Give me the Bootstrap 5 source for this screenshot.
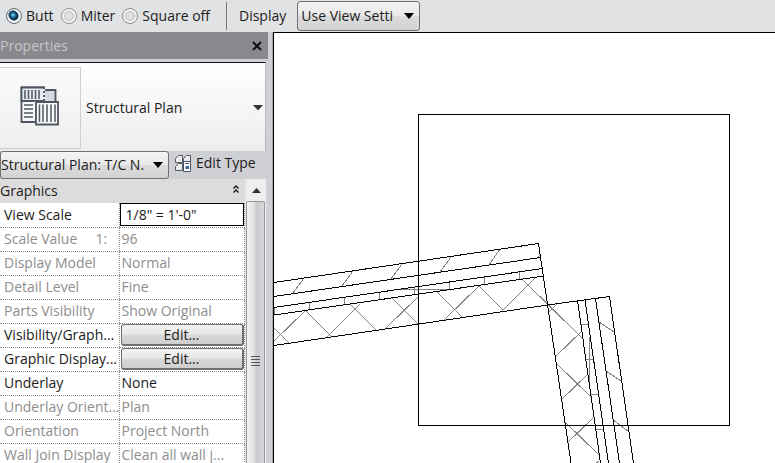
<!DOCTYPE html>
<html lang="en">
<head>
<meta charset="utf-8">
<meta name="viewport" content="width=device-width, initial-scale=1">
<title>Structural Plan</title>
<link rel="stylesheet" href="https://cdn.jsdelivr.net/npm/bootstrap@5.3.0/dist/css/bootstrap.min.css">
<style>
body{font-family:"Open Sans","Noto Sans",sans-serif;font-size:14px;line-height:20px;color:#1c1c1c;background:#e1e2e4}
.options-bar{height:32px;padding-left:6px;background:#e1e2e4}
.options-bar label{font-size:14px}
.opt-label{margin-right:7px}
.opt-radio{appearance:none;width:16px;height:16px;margin:0 4px 0 0;border:1px solid #8b8d90;border-radius:50%;background:radial-gradient(circle,#e0e0e0 0 3px,#c4c6c8 4px,#f7f7f7 6px)}
.opt-radio:checked{border-color:#5f6a72;background:radial-gradient(circle at 6px 6px,#a5e4f7 0,#1d7aa6 2px,#0b3350 4px,transparent 5px),radial-gradient(circle,#0b3350 0 4px,#f4f6f7 5px)}
.bar-rule{width:1px;height:28px;margin:0 12px 0 16px;background:#77787b}
.display-label{margin-right:11px}
.combo{appearance:none;border:1px solid #707070;border-radius:3px;color:#1c1c1c;font-size:14px;background:url("data:image/svg+xml,%3Csvg xmlns='http://www.w3.org/2000/svg' width='10' height='6'%3E%3Cpath d='M0 0h10L5 6z'/%3E%3C/svg%3E") no-repeat right 5px center,linear-gradient(#f4f4f4,#e9e9e9 48%,#dcdcdc 52%,#d2d2d2);white-space:nowrap}
.display-combo{width:123px;height:30px;padding:0 20px 0 3px}
.palette{width:273px;background:#cfd0d3;border-right:1px solid #a5a6a9}
.palette-title{width:268px;height:27px;padding-right:6px;background:#89888c;color:#c6c6ca}
.type-area{width:266px;height:89px;margin-top:3px;border-top:1px solid #111;border-right:1px solid #b9babc;background:linear-gradient(#fff,#ededed)}
.type-thumb{width:81px;height:82px;margin-top:4px;border:1px solid #cfcfcf;border-left:0;background:linear-gradient(#fafafa,#efefef)}
.type-name{padding:2px 2px 0 5px;color:#3d3d3d}
.plain-btn{border:0;background:none;color:#1c1c1c}
.view-combo{width:169px;height:28px;padding:0 18px 0 0}
.edit-type{margin-left:6px;gap:4px}
.grid-box{width:266px;background:#fff}
.props{width:245px;table-layout:fixed;border-collapse:collapse}
.props th,.props td{height:24px;padding:0 0 0 4px;font-weight:400;line-height:20px;white-space:nowrap;overflow:hidden;border-bottom:1px dotted #8c8c8c}
.props td{padding-left:2px;border-left:1px dotted #8c8c8c;border-right:1px dotted #8c8c8c}
.props .group-row th{padding:0 6px 0 0;border:0;background:#dcdcdd}
.props .off{color:#8e8e8e}
.props .flush{padding:0}
.scale-box{display:block;width:100%;height:23px;padding:0 5px;border:1px solid #000;outline:0;background:#fff;color:#1c1c1c}
.edit-btn{display:block;width:123px;height:22px;margin:0 1px;padding:0;border:1px solid #707070;border-right-width:2px;border-bottom-width:2px;border-radius:3px;background:linear-gradient(#f2f2f2,#e8e8e8 45%,#d8d8d8 55%,#cfcfcf);color:#1c1c1c;line-height:18px}
.scroll-track{width:21px;border-left:1px solid #e4e4e4;background:#eee}
.scroll-thumb{width:19px;border:1px solid #97989a;border-bottom:0;border-radius:2px 2px 0 0;background:linear-gradient(90deg,#f3f3f3,#e2e2e4 40%,#c8c9cc 55%,#d6d7d9)}
.scroll-up{height:22px}
.grip{padding-top:154px}
.sheet{border-left:1px solid #000;border-top:1px solid #000;background:#fff}
.sheet path,.sheet rect{fill:none;stroke:#000;shape-rendering:crispEdges}
.sheet .hatch path{stroke:#858585}
</style>
</head>
<body class="vh-100 overflow-hidden d-flex flex-column">
<header class="options-bar d-flex align-items-center flex-shrink-0">
  <input class="opt-radio" type="radio" name="join" id="butt" checked><label for="butt" class="opt-label">Butt</label>
  <input class="opt-radio" type="radio" name="join" id="miter"><label for="miter" class="opt-label">Miter</label>
  <input class="opt-radio" type="radio" name="join" id="square"><label for="square">Square off</label>
  <span class="bar-rule"></span>
  <label for="display" class="display-label">Display</label>
  <select class="combo display-combo" id="display"><option>Use View Setti</option></select>
</header>
<div class="d-flex flex-grow-1 overflow-hidden">
  <aside class="palette d-flex flex-column flex-shrink-0">
    <div class="palette-title d-flex align-items-center justify-content-between flex-shrink-0">
      <span>Properties</span>
      <button class="plain-btn d-flex p-0" type="button" aria-label="Close"><svg width="10" height="10" viewBox="0 0 10 10"><path d="M1 1l8 8M9 1L1 9" stroke="#111" stroke-width="2"/></svg></button>
    </div>
    <div class="type-area d-flex flex-shrink-0">
      <div class="type-thumb d-flex align-items-center justify-content-center flex-shrink-0">
        <svg class="mb-1" width="40" height="40" viewBox="0 0 40 40" fill="#f7f9fb" stroke="#505660" stroke-width="1.8">
          <path d="M24 4h11.500v13H24z" fill="#d5dae6"/><path d="M1.500 1.500H24V17H16v19H1.500z"/>
          <path d="M1.500 1.500H24V15H1.500z" fill="#e6eaf1"/>
          <path d="M5 4v9M8.500 4v9M12 4v9M15.500 4v9M19 4v9M4 19h9M4 23h9M4 27h9M4 31h9" stroke-width="1.500"/>
          <path d="M24 3v13H15.500v19" fill="none" stroke="#fff" stroke-dasharray="2 2"/>
          <path d="M16 16h22v22.500H16z"/><path d="M19.500 18.500v17.500M23 18.500v17.500M27 18.500v17.500M31 18.500v17.500M35 18.500v17.500" stroke-width="1.500"/>
        </svg>
      </div>
      <button class="plain-btn type-name d-flex align-items-center justify-content-between flex-grow-1" type="button"><span>Structural Plan</span>
        <svg width="10" height="6" viewBox="0 0 10 6"><path d="M0 0h10L5 5.500z" fill="#333"/></svg></button>
    </div>
    <div class="d-flex flex-shrink-0">
      <select class="combo view-combo" aria-label="View"><option>Structural Plan: T/C N.</option></select>
      <button class="plain-btn edit-type d-flex align-items-center px-0 pt-0 pb-1" type="button">
        <svg width="17" height="17" viewBox="0 0 17 17" fill="#ececee" stroke="#55585e"><path d="M3.500.5h4v7h-7v-4zM11.500.5h4v7h-7v-4zM3.500 8.500h4v7h-7v-4z"/><path d="M8.500 6.500h7v10h-7z" fill="#fff" stroke="#45536b"/><path d="M10 8.500h4" stroke="#45536b"/><path d="M10.500 11h3.500v3h-3.500z" fill="#3a63a0" stroke="none"/></svg>
        <span>Edit Type</span></button>
    </div>
    <div class="grid-box d-flex flex-grow-1 overflow-hidden">
      <div class="overflow-hidden">
      <table class="props">
        <colgroup><col style="width:119px"><col></colgroup>
        <tbody>
        <tr class="group-row"><th colspan="2"><div class="d-flex align-items-center justify-content-between"><span>Graphics</span><svg class="mb-1" width="6" height="8" viewBox="0 0 6 8" fill="none" stroke="#111" stroke-width="1.300"><path d="M.5 3.500L3 1l2.500 2.500M.5 7.500L3 5l2.500 2.500"/></svg></div></th></tr>
        <tr><th scope="row"><label for="scale">View Scale</label></th><td class="flush"><input class="scale-box" id="scale" value="1/8&quot; = 1'-0&quot;"></td></tr>
        <tr class="off"><th scope="row">Scale Value &nbsp;&nbsp;&nbsp; 1:</th><td>96</td></tr>
        <tr class="off"><th scope="row">Display Model</th><td>Normal</td></tr>
        <tr class="off"><th scope="row">Detail Level</th><td>Fine</td></tr>
        <tr class="off"><th scope="row">Parts Visibility</th><td>Show Original</td></tr>
        <tr><th scope="row">Visibility/Graph...</th><td class="flush"><button class="edit-btn" type="button">Edit...</button></td></tr>
        <tr><th scope="row">Graphic Display...</th><td class="flush"><button class="edit-btn" type="button">Edit...</button></td></tr>
        <tr><th scope="row">Underlay</th><td>None</td></tr>
        <tr class="off"><th scope="row">Underlay Orient...</th><td>Plan</td></tr>
        <tr class="off"><th scope="row">Orientation</th><td>Project North</td></tr>
        <tr class="off"><th scope="row">Wall Join Display</th><td>Clean all wall j...</td></tr>
        </tbody>
      </table>
      </div>
      <div class="scroll-track d-flex flex-column flex-shrink-0">
        <button class="plain-btn scroll-up d-flex align-items-center justify-content-center flex-shrink-0 p-0" type="button" aria-label="Scroll up"><svg width="9" height="5" viewBox="0 0 9 5"><path d="M0 5h9L4.500 0z" fill="#333"/></svg></button>
        <div class="scroll-thumb grip flex-grow-1 ps-1"><svg class="d-block" width="9" height="11" viewBox="0 0 9 11" stroke="#55565a"><path d="M0 .5h9M0 3.500h9M0 6.500h9M0 9.500h9"/></svg></div>
      </div>
    </div>
  </aside>
  <main class="sheet flex-grow-1 overflow-hidden">
    <svg class="d-block" width="100%" height="100%" role="img" aria-label="Wall corner in plan">
      <g transform="translate(-274 -33)">
        <g class="hatch">
          <path d="M293 293L304 278M342 286L353 271M391 279L402 264M440 272L451 257M489 265L500 249M538 257L540 255"/>
          <path d="M274.500 307V314M309.500 302V310M344.500 297V305M379.500 292V299M414.500 287V294M449.500 282V289M484.500 276V284M519.500 271V279M400 289.500H450"/>
          <path d="M274 341L305 311M327 337L360 304M386 328L419 296M444 320L479 286M503 310L536 277M549 312L557 304"/>
          <path d="M274 328L289 343M306 311L332 337M350 304L376 330M392 298L418 324M436 291L462 317M479 286L503 310M521 278L582 338"/>
          <path d="M556 356L582 331M561 400L587 375M567 443L593 418M596 463L599 461M556 363L591 397M564 421L599 455"/>
          <path d="M580 324.500H588M585 359.500H593M591 394.500H598M595 429.500H603M589.500 337V383"/>
          <path d="M599 322L614 332M606 371L621 381M613 420L628 431"/>
        </g>
        <path d="M274 282.500L538.500 243.500L571 463M274 296.500L540.500 257.500M274 307.500L542.500 268.500M274 315L543.500 276M274 345.500L547.500 305L609.500 296.500L633.500 463M577.500 300.500L600.500 463M585 300L608.500 463M595.500 299L619.500 463"/>
        <rect x="418.500" y="114.500" width="311" height="311"/>
      </g>
    </svg>
  </main>
</div>
<script src="https://cdn.jsdelivr.net/npm/bootstrap@5.3.0/dist/js/bootstrap.bundle.min.js"></script>
</body>
</html>
